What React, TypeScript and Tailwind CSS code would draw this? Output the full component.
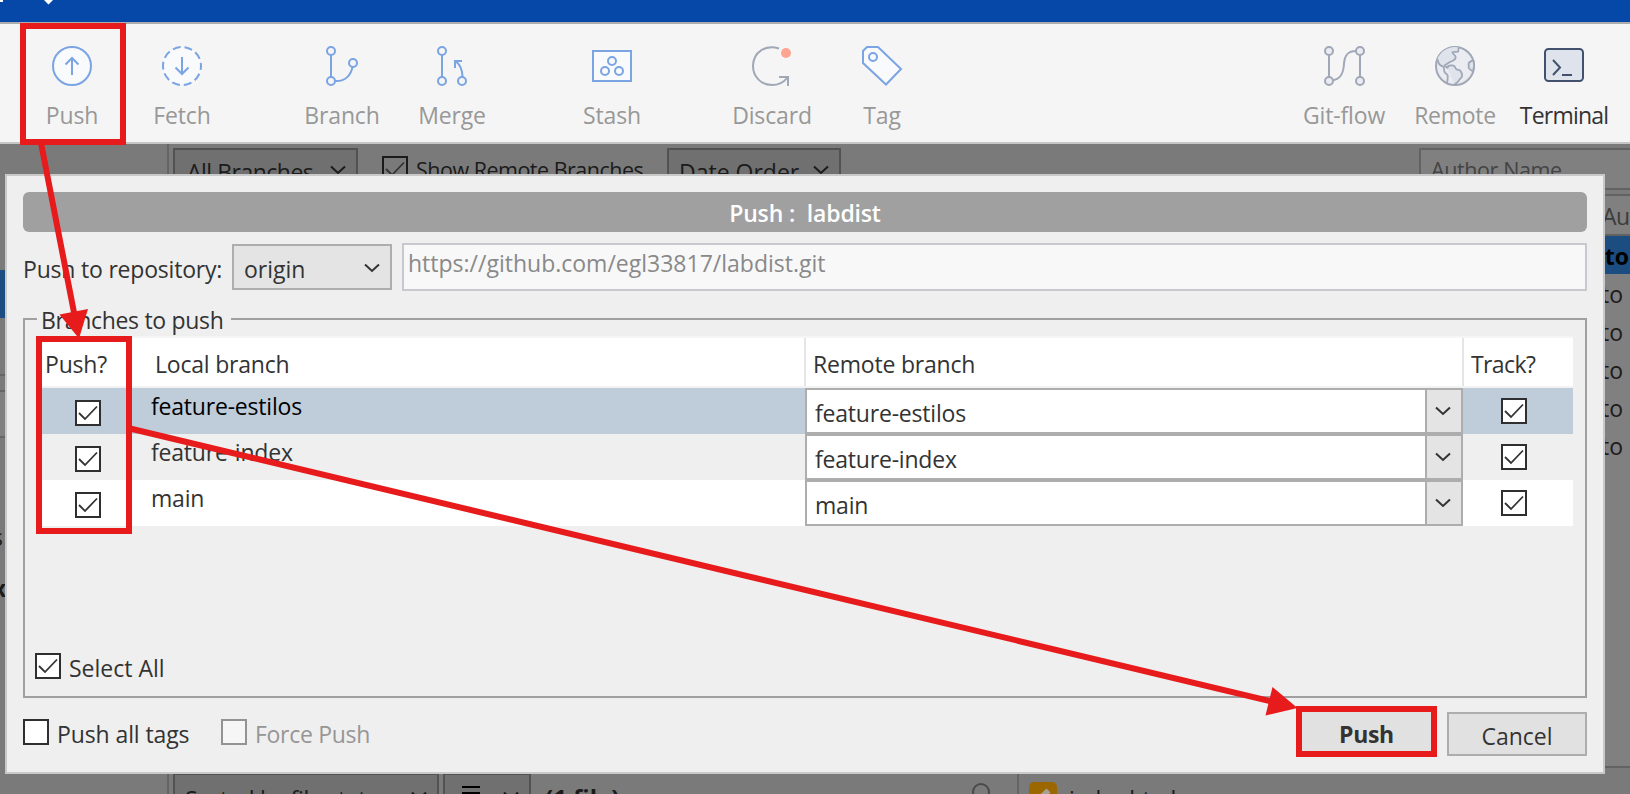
import React from "react";

type Tone = "blue" | "gray";

const toneColor: Record<Tone, string> = { blue: "#7ba4e3", gray: "#a0a8b7" };

function Icon({ tone = "blue", children }: { tone?: Tone; children: React.ReactNode }) {
  return (
    <svg width="44" height="44" viewBox="0 0 44 44" fill="none" stroke={toneColor[tone]} strokeWidth="2">
      {children}
    </svg>
  );
}

const PushIcon = () => (
  <Icon>
    <circle cx="22" cy="22" r="19" fill="#f9fafc" />
    <path d="M22 31V14.5M15.5 20.5L22 14l6.500 6.500" />
  </Icon>
);

const FetchIcon = () => (
  <Icon>
    <circle cx="22" cy="22" r="19" fill="#f9fafc" strokeDasharray="7.950 3.990" strokeDashoffset="4" />
    <path d="M22 13v16.500M15.500 23.500L22 30l6.500-6.500" />
  </Icon>
);

const BranchIcon = () => (
  <Icon>
    <circle cx="11" cy="7" r="4" />
    <circle cx="11" cy="37" r="4" />
    <circle cx="33" cy="19" r="4" />
    <path d="M11 11v22M15 37c10 1 16-6 17.500-14" />
  </Icon>
);

const MergeIcon = () => (
  <Icon>
    <circle cx="12" cy="7" r="4" />
    <circle cx="12" cy="37" r="4" />
    <circle cx="32" cy="37" r="4" />
    <path d="M12 11v22M32.500 33c0-7-2-12-7-16M25 24v-7h7" />
  </Icon>
);

const StashIcon = () => (
  <Icon>
    <rect x="3" y="7" width="38" height="30" fill="#f9fafc" />
    <circle cx="22" cy="17" r="4" />
    <circle cx="15" cy="27" r="4" />
    <circle cx="29" cy="27" r="4" />
  </Icon>
);

const DiscardIcon = () => (
  <Icon tone="gray">
    <path d="M29 4.500C16 0 3 8 3 22c0 11 8.500 19 19 19 7 0 12-3 15-7" />
    <path d="M29 33h9v9" />
    <circle cx="36" cy="9" r="5" fill="#ffa492" stroke="none" />
  </Icon>
);

const TagIcon = () => (
  <Icon>
    <path d="M3 19V7l4-4h11l23 22L26 40.500z" fill="#f9fafc" />
    <circle cx="13" cy="13" r="4" />
  </Icon>
);

const GitFlowIcon = () => (
  <Icon tone="gray">
    <path d="M7 11v22M38 11v22M11 36.300C20 35 21.500 27 22 20C22.500 11 26 7 34 7" />
    <g fill="#eaecf1">
      <circle cx="7" cy="7" r="4" />
      <circle cx="7" cy="37" r="4" />
      <circle cx="38" cy="7" r="4" />
      <circle cx="38" cy="37" r="4" />
    </g>
  </Icon>
);

const RemoteIcon = () => (
  <Icon tone="gray">
    <circle cx="22" cy="22" r="19" fill="#eaecf1" />
    <g fill="#dfe3ec" strokeWidth="1.800" strokeLinejoin="round">
      <path
        d="M4.300 15.500C7 8 14 3 22 3l3.500.5L25 7.700l-5.300.6 3 4.400-.7 4-6.700 2.600-3.300 2.200 2.500 3-3.500-2.500L8 21z"
        stroke="none"
      />
      <path d="M25.700 3.500L25.200 7.500C23.500 8.500 21 7.300 19.500 8.300c0 2 3.200 2.700 3.200 4.900 0 3.500-4.200 3.600-6.700 5.300l-4.500 3 3.200 2.500" fill="none" />
      <path d="M14.700 24.500C14 21.500 18 21 20.500 21.700c2 .6 1.500 3 3 3.600 1.700.5 3.500.3 4.300 2 1.200 2 1.700 3.700 1.200 5.200-.8 2-2.500 2.300-3.200 4.200-.8 1.600-2.800 2.500-4.300 3.800" />
      <path d="M4.500 15.500C5 18 6 20.500 8 21.700c1.500.6 3 .5 3 2.300 0 2-.3 3.500 1.300 5 1.500 1.300 2.700 1.500 2.500 3.500-.5 2 .3 2.500-.8 6.500" fill="none" />
      <path d="M40.500 16.500c-3 .5-5 1.800-5 4 .5 1 .8 1.800 0 3 .8 2 2.500 3 4.500 3.800 1.200-3.500 1.500-7 .5-10.800z" />
    </g>
  </Icon>
);

const TerminalIcon = () => (
  <svg width="44" height="44" viewBox="0 0 44 44" fill="none" stroke="#42526e" strokeWidth="2">
    <rect x="3" y="5" width="38" height="32" rx="3.500" fill="#dfe3eb" />
    <path d="M11 16l7 7.500-7 7.500M20 31h10" />
  </svg>
);

function Tool({ label, icon, className = "text-[#989898]" }: { label: string; icon: React.ReactNode; className?: string }) {
  return (
    <div className={`flex w-[110px] shrink-0 flex-col items-center pt-5 ${className}`}>
      {icon}
      <span className="mt-[11px] whitespace-nowrap leading-8">{label}</span>
    </div>
  );
}

function Chevron({ className = "" }: { className?: string }) {
  return (
    <svg width="16" height="10" viewBox="0 0 16 10" fill="none" stroke="currentColor" strokeWidth="2" className={`shrink-0 ${className}`}>
      <path d="M1 1.500l7 6.500 7-6.500" />
    </svg>
  );
}

function Check({ checked = true, className = "border-[#2f2f31] bg-white" }: { checked?: boolean; className?: string }) {
  return (
    <span className={`flex size-[26px] shrink-0 border-2 ${className}`}>
      {checked && (
        <svg width="22" height="22" viewBox="0 0 22 22" fill="none" stroke="#333" strokeWidth="1.800">
          <path d="M2 11l6 6L20 4.500" />
        </svg>
      )}
    </span>
  );
}

const rows = [
  { name: "feature-estilos", className: "bg-[#bfccda] text-black" },
  { name: "feature-index", className: "bg-[#efefef]" },
  { name: "main", className: "bg-white" },
];

function BranchTable() {
  return (
    <div className="ml-[17px] w-[1531px] border-t-2 border-[#f5f5f5] tracking-[-0.2px]">
      <div className="flex h-[50px] border-b-2 border-[#f2f2f2] bg-white pt-[10px] leading-8">
        <span className="w-[113px] pl-[3px]">Push?</span>
        <span className="w-[649px]">Local branch</span>
        <span className="-mt-[10px] h-12 w-[658px] border-l-2 border-[#e5e5e5] pl-[7px] pt-[10px]">Remote branch</span>
        <span className="-mt-[10px] h-12 border-l-2 border-[#e5e5e5] pl-[7px] pt-[10px] tracking-[-0.6px]">Track?</span>
      </div>
      {rows.map((r) => (
        <div key={r.name} className={`flex h-[46px] ${r.className}`}>
          <div className="w-[109px] pl-[33px] pt-3">
            <Check />
          </div>
          <div className="w-[654px] leading-[36px]">{r.name}</div>
          <div className="flex w-[658px] border-2 border-[#adadad] bg-white text-[#333]">
            <span className="w-[618px] pl-[8px] pt-[7px] leading-8">{r.name}</span>
            <span className="flex grow items-center justify-center border-l-2 border-[#adadad] bg-[#e4e4e4] pr-[2px]">
              <Chevron />
            </span>
          </div>
          <div className="pl-[38px] pt-[10px]">
            <Check />
          </div>
        </div>
      ))}
    </div>
  );
}

function PushDialog() {
  return (
    <div className="absolute left-[5px] top-[174px] h-[600px] w-[1600px] border-2 border-[#c9c9c9] bg-[#efefef] px-4 pt-4">
      <div className="h-10 whitespace-pre rounded-md bg-[#a0a0a0] text-center font-semibold leading-[43px] tracking-[-0.15px] text-white">
        {"Push :  labdist"}
      </div>
      <div className="mt-[11px] flex h-12">
        <span className="w-[209px] whitespace-nowrap pt-[10px] leading-8 tracking-[-0.2px]">Push to repository:</span>
        <div className="mt-px flex h-[46px] w-[160px] items-center justify-between border-2 border-[#adadad] bg-[#e4e4e4] pl-[10px] pr-[10px]">
          <span className="pt-[4px] leading-8">origin</span>
          <Chevron className="mt-px" />
        </div>
        <div className="ml-[10px] grow border-2 border-[#c8c9ce] bg-[#f8f8f8] pl-1 leading-[36px] text-[#898989]">
          https://github.com/egl33817/labdist.git
        </div>
      </div>
      <div className="mt-[27px] flex h-[380px] flex-col border-2 border-[#a0a0a0]">
        <div className="-mt-[17px] ml-3 flex w-[194px] whitespace-nowrap bg-[#efefef] pl-1 pt-px leading-8 tracking-[-0.3px]">Branches to push</div>
        <div>
          <BranchTable />
        </div>
        <div className="mb-[17px] ml-[10px] mt-auto flex h-[26px] items-center gap-2">
          <Check />
          <span className="pt-[3px] leading-8">Select All</span>
        </div>
      </div>
      <div className="mt-2 flex h-[51px]">
        <div className="mt-[13px] flex h-[26px] w-[198px] items-center gap-2">
          <Check checked={false} />
          <span className="whitespace-nowrap pt-[3px] leading-8 tracking-[-0.1px]">Push all tags</span>
        </div>
        <div className="mt-[13px] flex h-[26px] items-center gap-2">
          <Check checked={false} className="border-[#939393] bg-[#f6f6f6]" />
          <span className="whitespace-nowrap pt-[3px] leading-8 tracking-[-0.3px] text-[#969696]">Force Push</span>
        </div>
        <button className="ml-auto h-[51px] w-[141px] border-[6px] border-[#e71b1b] bg-[#e1e1e1] pt-[3px] font-bold leading-[38px] tracking-[-0.3px]">Push</button>
        <button className="ml-[10px] mt-[6px] h-[44px] w-[140px] border-2 border-[#adadad] bg-[#e1e1e1] pt-[2px] leading-[40px]">Cancel</button>
      </div>
    </div>
  );
}

function Backdrop() {
  return (
    <div className="flex h-[650px] bg-[#7a7a7a] text-[#1b1b1b]">
      <aside className="w-[169px] shrink-0 overflow-hidden border-r-2 border-[#646464]">
        <div className="mt-[126px] h-12 bg-[#1b4d80]" />
        <div className="mt-[56px] h-[18px] border-y-2 border-[#666]" />
        <div className="h-[46px] border-b-2 border-[#666] bg-[#808080]" />
        <div className="mt-[83px] flex w-[3px] justify-end leading-8">tags</div>
        <div className="mt-[19px] flex w-[6px] justify-end font-bold leading-8">index</div>
      </aside>
      <main className="flex grow flex-col overflow-hidden">
        <div className="flex h-[46px] shrink-0">
          <div className="ml-1 mt-1 flex h-[46px] w-[185px] justify-between border-2 border-[#525252] bg-[#707070] pl-3 pr-[10px]">
            <span className="pt-[6px] leading-8 tracking-[-0.5px]">All Branches</span>
            <Chevron className="mt-[15px]" />
          </div>
          <Check className="ml-6 mt-3 border-[#1b1b1b]" />
          <span className="ml-2 mt-[10px] w-[251px] whitespace-nowrap text-[21.5px] leading-8 tracking-[-0.5px]">Show Remote Branches</span>
          <div className="mt-1 flex h-[46px] w-[174px] justify-between border-2 border-[#525252] bg-[#707070] pl-[10px] pr-[10px]">
            <span className="pt-[6px] leading-8">Date Order</span>
            <Chevron className="mt-[15px]" />
          </div>
          <div className="ml-auto mt-1 h-[42px] w-[211px] border-2 border-r-0 border-[#626262] bg-[#808080] pl-[10px] pt-[4px] text-[21.5px] leading-8 tracking-[-0.4px] text-[#444]">
            Author Name
          </div>
        </div>
        <div className="mt-1 flex h-[42px] shrink-0 justify-end border-y-2 border-[#626262] bg-[#808080] text-[#3c3c3c]">
          <span className="w-[28px] overflow-hidden pt-[4px] leading-8 tracking-[-0.5px]">Author</span>
        </div>
        <div className="h-[38px] shrink-0 bg-[#1b4d80] pr-[1px] pt-[4px] text-right font-bold leading-8 text-black">to</div>
        <div className="flex h-[494px] shrink-0 flex-col border-b-2 border-[#626262] bg-[#808080]">
          {[0, 1, 2, 3, 4].map((i) => (
            <div key={i} className="h-[38px] pr-[7px] pt-[4px] text-right leading-8">to</div>
          ))}
        </div>
        <div className="flex h-[26px] shrink-0">
          <div className="ml-1 mt-[5px] flex h-[46px] w-[266px] justify-between border-2 border-[#525252] bg-[#707070] pl-[10px] pr-[10px]">
            <span className="whitespace-nowrap pt-[8px] leading-8 tracking-[-0.3px]">Sorted by file status</span>
            <Chevron className="mt-[16px]" />
          </div>
          <div className="ml-1 mt-[5px] flex h-[46px] w-[88px] justify-between border-2 border-[#525252] bg-[#707070] pl-[17px] pr-[10px]">
            <div className="mt-[11px] h-[22px] w-[18px] border-y-2 border-black">
              <div className="mt-1 h-[2px] bg-black" />
            </div>
            <Chevron className="mt-[16px]" />
          </div>
          <span className="ml-[14px] mt-[14px] text-[24px] font-bold leading-8">(1 file)</span>
          <svg width="22" height="26" viewBox="0 0 22 26" fill="none" stroke="#4a4a4a" strokeWidth="2" className="ml-auto mt-[14px] shrink-0">
            <circle cx="10" cy="10" r="8" />
            <path d="M5 16l-5 7" />
          </svg>
          <div className="ml-[24px] flex h-[50px] w-[613px] border-l-2 border-[#646464] pl-[10px]">
            <svg width="28" height="28" viewBox="0 0 28 28" className="mt-[14px] shrink-0">
              <rect width="28" height="28" rx="5" fill="#9b6700" />
              <path d="M17.500 6.500l4 4-10 10H7v-4z" fill="#a9a195" />
            </svg>
            <span className="ml-[12px] mt-[15px] leading-8 tracking-[-0.8px]">index.html</span>
          </div>
        </div>
      </main>
    </div>
  );
}

function Annotations() {
  return (
    <>
      <div className="absolute left-5 top-[23px] h-[122px] w-[106px] border-[6px] border-[#e71b1b]" />
      <div className="absolute left-9 top-[336px] h-[198px] w-[96px] border-[6px] border-[#e71b1b]" />
      <svg width="1630" height="794" viewBox="0 0 1630 794" className="absolute left-0 top-0" stroke="#e71b1b" strokeWidth="6">
        <path d="M41 143L74.500 315M130 428.500L1272 701.500" />
        <path d="M59.500 314.500L88 309l-9 29.500zM1272.500 687l-7 28.500 32-7.500z" fill="#e71b1b" stroke="none" />
      </svg>
    </>
  );
}

export default function App() {
  return (
    <div className="relative h-[794px] w-[1630px] overflow-hidden bg-[#7a7a7a] font-['Open_Sans',sans-serif] text-[23px] text-[#333]">
      <header className="h-6 overflow-hidden border-b-2 border-[#adadad] bg-[#0648a8]">
        <svg width="60" height="6" viewBox="0 0 60 6" fill="#fff">
          <path d="M0 0h3v2H0zM44 0h9l-4.500 4.500z" />
        </svg>
      </header>
      <nav className="flex h-[120px] border-b-2 border-[#c6c6c6] bg-[#f5f5f5] pl-[17px] pr-[11px] tracking-[-0.15px]">
        <Tool label="Push" icon={<PushIcon />} />
        <Tool label="Fetch" icon={<FetchIcon />} />
        <div className="w-[50px]" />
        <Tool label="Branch" icon={<BranchIcon />} />
        <Tool label="Merge" icon={<MergeIcon />} />
        <div className="w-[50px]" />
        <Tool label="Stash" icon={<StashIcon />} />
        <div className="w-[50px]" />
        <Tool label="Discard" icon={<DiscardIcon />} />
        <Tool label="Tag" icon={<TagIcon />} />
        <div className="grow" />
        <Tool label="Git-flow" icon={<GitFlowIcon />} />
        <Tool label="Remote" icon={<RemoteIcon />} className="pl-[2px] tracking-[-0.3px] text-[#989898]" />
        <Tool label="Terminal" icon={<TerminalIcon />} className="tracking-[-0.8px] text-[#333]" />
      </nav>
      <Backdrop />
      <PushDialog />
      <Annotations />
    </div>
  );
}
